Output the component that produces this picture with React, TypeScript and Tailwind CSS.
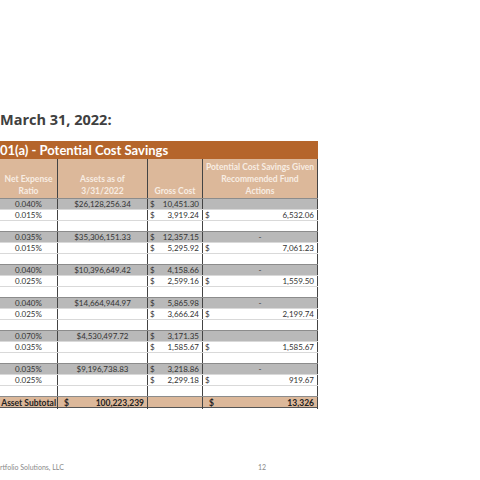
import React from "react";

type Row = { kind: "gray" | "white" | "blank"; a?: string; b?: string; c?: string; d?: string };

const rows: Row[] = [
  { kind: "gray", a: "0.040%", b: "$26,128,256.34", c: "10,451.30", d: "" },
  { kind: "white", a: "0.015%", b: "", c: "3,919.24", d: "6,532.06" },
  { kind: "blank" },
  { kind: "gray", a: "0.035%", b: "$35,306,151.33", c: "12,357.15", d: "-" },
  { kind: "white", a: "0.015%", b: "", c: "5,295.92", d: "7,061.23" },
  { kind: "blank" },
  { kind: "gray", a: "0.040%", b: "$10,396,649.42", c: "4,158.66", d: "-" },
  { kind: "white", a: "0.025%", b: "", c: "2,599.16", d: "1,559.50" },
  { kind: "blank" },
  { kind: "gray", a: "0.040%", b: "$14,664,944.97", c: "5,865.98", d: "-" },
  { kind: "white", a: "0.025%", b: "", c: "3,666.24", d: "2,199.74" },
  { kind: "blank" },
  { kind: "gray", a: "0.070%", b: "$4,530,497.72", c: "3,171.35", d: "" },
  { kind: "white", a: "0.035%", b: "", c: "1,585.67", d: "1,585.67" },
  { kind: "blank" },
  { kind: "gray", a: "0.035%", b: "$9,196,738.83", c: "3,218.86", d: "-" },
  { kind: "white", a: "0.025%", b: "", c: "2,299.18", d: "919.67" },
  { kind: "blank" },
];

function DataRow({ r }: { r: Row }) {
  const bg = r.kind === "gray" ? "bg-[#b9b9b9]" : "bg-white";
  const border = r.kind === "gray" ? "border-t border-t-[#8c8c8c]" : "border-t border-t-[#d9d9d9]";
  return (
    <div className={`grid grid-cols-[58px_90px_55px_115px] h-[11px] text-[8px] leading-[11px] text-[#333] ${bg} ${border}`}>
      <div className="text-center border-r border-r-[#444]">{r.a}</div>
      <div className="text-center border-r border-r-[#444]">{r.b}</div>
      <div className="flex justify-between pl-[2px] pr-[3px] border-r border-r-[#444]">
        {r.c ? (
          <>
            <span>$</span>
            <span>{r.c}</span>
          </>
        ) : null}
      </div>
      <div className="border-r border-r-[#444]">
        {r.d === "-" ? (
          <div className="text-center">-</div>
        ) : r.d ? (
          <div className="flex justify-between pl-[2px] pr-[3px]">
            <span>$</span>
            <span>{r.d}</span>
          </div>
        ) : null}
      </div>
    </div>
  );
}

export default function App() {
  return (
    <div className="w-[480px] h-[480px] bg-white flex flex-col font-['Lato',sans-serif] overflow-hidden">
      <div className="h-[110px]" />
      <div className="text-[14.5px] font-bold text-[#404040] leading-[20px] font-['Open_Sans',sans-serif]">March 31, 2022:</div>
      <div className="h-[11px]" />
      <div className="w-[318px] flex flex-col">
        <div className="h-[18px] bg-[#b5652b] text-white font-bold text-[13px] leading-[18px] whitespace-nowrap">
          01(a) - Potential Cost Savings
        </div>
        <div className="grid grid-cols-[58px_90px_55px_115px] h-[39px] bg-[#dcb89a] text-[#f8ede3] font-bold text-[8.5px] leading-[12px]">
          <div className="flex items-end justify-center text-center pb-[1px] border-r border-r-[#444]">
            Net Expense
            <br />
            Ratio
          </div>
          <div className="flex items-end justify-center text-center pb-[1px] border-r border-r-[#444]">
            Assets as of
            <br />
            3/31/2022
          </div>
          <div className="flex items-end justify-center text-center pb-[1px] border-r border-r-[#444]">Gross Cost</div>
          <div className="flex items-end justify-center text-center pb-[1px] border-r border-r-[#444] whitespace-nowrap">
            Potential Cost Savings Given
            <br />
            Recommended Fund
            <br />
            Actions
          </div>
        </div>
        {rows.map((r, i) => (
          <DataRow key={i} r={r} />
        ))}
        <div className="grid grid-cols-[58px_90px_55px_115px] h-[12px] bg-[#dcb89a] text-[8.5px] leading-[12px] font-bold text-[#222] border-t border-t-[#8c8c8c] border-b border-b-[#555]">
          <div className="text-right pr-[1px] border-r border-r-[#444] whitespace-nowrap">Asset Subtotal</div>
          <div className="flex justify-between pl-[6px] pr-[3px] border-r border-r-[#444]">
            <span>$</span>
            <span>100,223,239</span>
          </div>
          <div className="border-r border-r-[#444]" />
          <div className="flex justify-between pl-[6px] pr-[3px] border-r border-r-[#444]">
            <span>$</span>
            <span>13,326</span>
          </div>
        </div>
      </div>
      <div className="flex-1" />
      <div className="h-[18px] flex text-[7px] text-[#8a8a8a] leading-[10px]">
        <div className="w-[258px] whitespace-nowrap">rtfolio Solutions, LLC</div>
        <div>12</div>
      </div>
    </div>
  );
}
